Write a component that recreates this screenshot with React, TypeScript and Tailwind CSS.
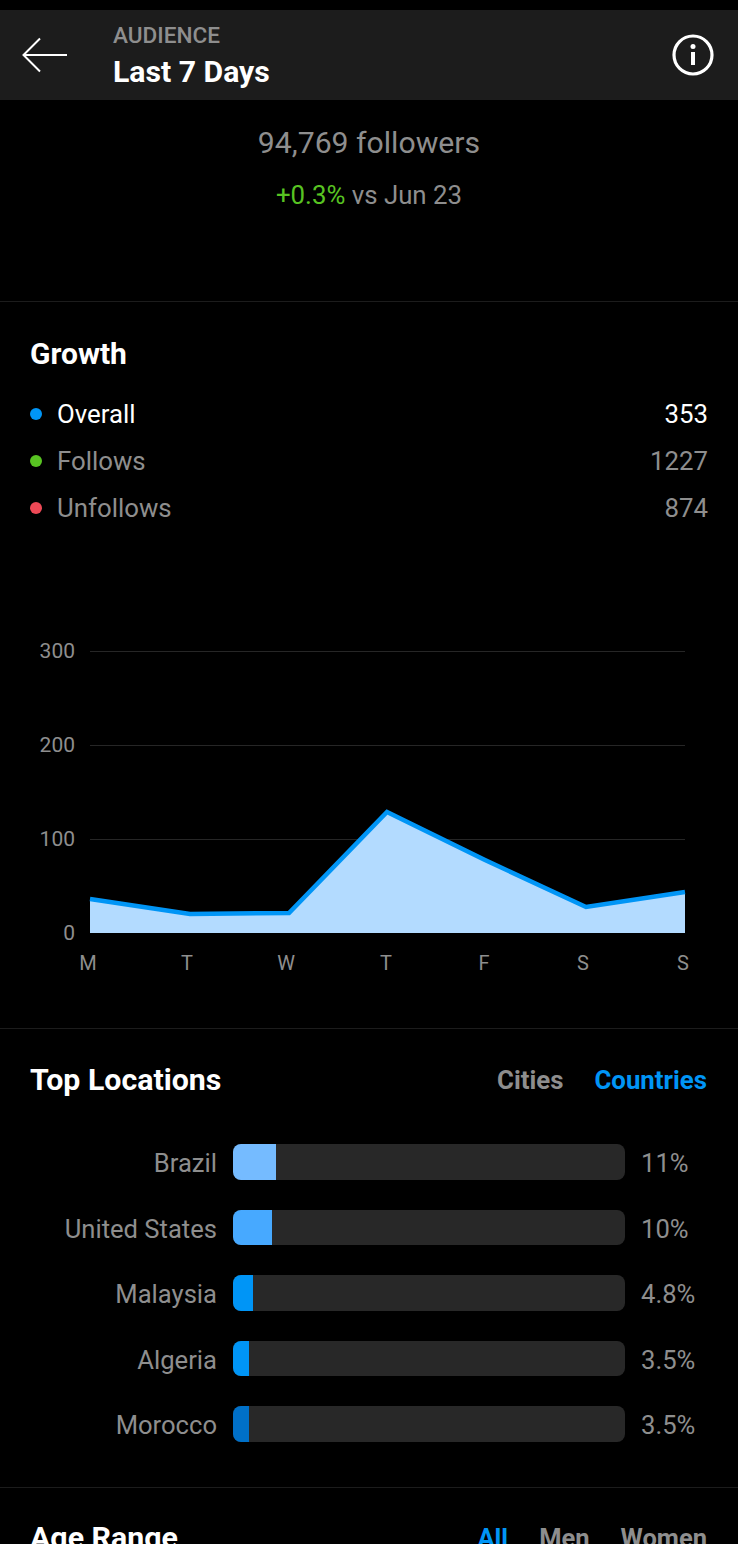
const growth = [
  { label: "Overall", value: "353", dot: "bg-[#0095f6]", text: "text-white" },
  { label: "Follows", value: "1227", dot: "bg-[#58c322]", text: "text-[#8e8e8e]" },
  { label: "Unfollows", value: "874", dot: "bg-[#ed4956]", text: "text-[#8e8e8e]" },
];

const locations = [
  { name: "Brazil", pct: "11%", fill: "w-[43px] bg-[#75bbff]" },
  { name: "United States", pct: "10%", fill: "w-[39px] bg-[#47a9ff]" },
  { name: "Malaysia", pct: "4.8%", fill: "w-[20px] bg-[#0095f6]" },
  { name: "Algeria", pct: "3.5%", fill: "w-[16px] bg-[#0095f6]" },
  { name: "Morocco", pct: "3.5%", fill: "w-[16px] bg-[#0070c8]" },
];

const line = "90,899 190,914 289,913 387,812 485,860 586,907 685,892";

function Chart() {
  return (
    <svg width="738" height="360" viewBox="0 630 738 360" className="block">
      {[651, 745, 839].map((y) => (
        <line key={y} x1="90" x2="685" y1={y + 0.5} y2={y + 0.5} stroke="#262626" strokeWidth="1" />
      ))}
      <polygon points={`90,933 ${line} 685,933`} fill="#b3dbff" />
      <polyline points={line} fill="none" stroke="#0095f6" strokeWidth="4.5" />
      {[
        ["300", 658],
        ["200", 752],
        ["100", 846],
        ["0", 940],
      ].map(([t, y]) => (
        <text key={t} x="75" y={y} textAnchor="end" fontSize="21" fill="#8e8e8e" fontFamily="Roboto, sans-serif">
          {t}
        </text>
      ))}
      {[
        ["M", 88],
        ["T", 187],
        ["W", 286],
        ["T", 386],
        ["F", 484],
        ["S", 583],
        ["S", 683],
      ].map(([t, x], i) => (
        <text key={i} x={x} y="970" textAnchor="middle" fontSize="20" fill="#8e8e8e" fontFamily="Roboto, sans-serif">
          {t}
        </text>
      ))}
    </svg>
  );
}

export default function App() {
  return (
    <div className="h-[1544px] w-[738px] overflow-hidden bg-black pt-[10px] font-['Roboto',sans-serif]">
      <div className="flex h-[90px] items-center justify-between bg-[#1c1c1c] pl-[22px] pr-[24px]">
        <div className="flex items-center">
          <svg width="46" height="36" viewBox="0 0 46 36" fill="none" stroke="white" strokeWidth="2" className="mr-[45px]">
            <path d="M1.5 18H45M18 1.5 1.5 18 18 34.5" />
          </svg>
          <div className="flex flex-col">
            <span className="text-[22.6px] leading-[28px] font-medium text-[#8e8e8e]">AUDIENCE</span>
            <span className="mt-[5px] text-[30.2px] leading-[34px] font-bold text-white">Last 7 Days</span>
          </div>
        </div>
        <svg width="42" height="42" viewBox="0 0 42 42" fill="none">
          <circle cx="21" cy="21" r="19" stroke="white" strokeWidth="3.2" />
          <circle cx="21" cy="12.5" r="2.5" fill="white" />
          <rect x="19" y="18" width="4" height="13" fill="white" />
        </svg>
      </div>

      <div className="flex h-[202px] flex-col items-center border-b border-[#1c1c1c] pt-[25px] text-[#8e8e8e]">
        <p className="text-[30.2px] leading-[36px]">94,769 followers</p>
        <p className="mt-[19px] text-[25.8px] leading-[30px]">
          <span className="text-[#58c322]">+0.3%</span> vs Jun 23
        </p>
      </div>

      <div className="px-[30px] pt-[32px]">
        <h2 className="text-[30px] leading-[40px] font-bold text-white">Growth</h2>
        <div className="mt-[22px] flex flex-col gap-[11px]">
          {growth.map((row) => (
            <div key={row.label} className={`flex h-[36px] items-center justify-between text-[25.8px] ${row.text}`}>
              <div className="flex items-center gap-[15px]">
                <span className={`h-[12px] w-[12px] rounded-full ${row.dot}`} />
                <span>{row.label}</span>
              </div>
              <span>{row.value}</span>
            </div>
          ))}
        </div>
      </div>

      <div className="mt-[104px]">
        <Chart />
      </div>

      <div className="mt-[38px] border-t border-[#1c1c1c] pl-[30px] pr-[31px] pt-[30px]">
        <div className="flex h-[42px] items-center justify-between">
          <h2 className="text-[30.3px] font-bold text-white">Top Locations</h2>
          <div className="flex gap-[31px] text-[25.8px] font-bold">
            <span className="text-[#8e8e8e]">Cities</span>
            <span className="text-[#0095f6]">Countries</span>
          </div>
        </div>
      </div>

      <div className="mt-[43px] flex flex-col gap-[30px] border-b border-[#1c1c1c] pb-[45px]">
        {locations.map((loc) => (
          <div key={loc.name} className="flex h-[35.6px] items-center">
            <span className="w-[217px] pt-[3px] text-right text-[25.6px] text-[#8e8e8e]">{loc.name}</span>
            <div className="ml-[16px] h-full w-[392px] overflow-hidden rounded-lg bg-[#282828]">
              <div className={`h-full ${loc.fill}`} />
            </div>
            <span className="ml-[16px] pt-[3px] text-[25.6px] text-[#8e8e8e]">{loc.pct}</span>
          </div>
        ))}
      </div>

      <div className="flex items-center justify-between pl-[30px] pr-[31px] pt-[30px]">
        <h2 className="text-[30.3px] leading-[40px] font-bold text-white">Age Range</h2>
        <div className="flex gap-[31px] text-[25.5px] font-bold">
          <span className="text-[#0095f6]">All</span>
          <span className="text-[#8e8e8e]">Men</span>
          <span className="text-[#8e8e8e]">Women</span>
        </div>
      </div>
    </div>
  );
}
